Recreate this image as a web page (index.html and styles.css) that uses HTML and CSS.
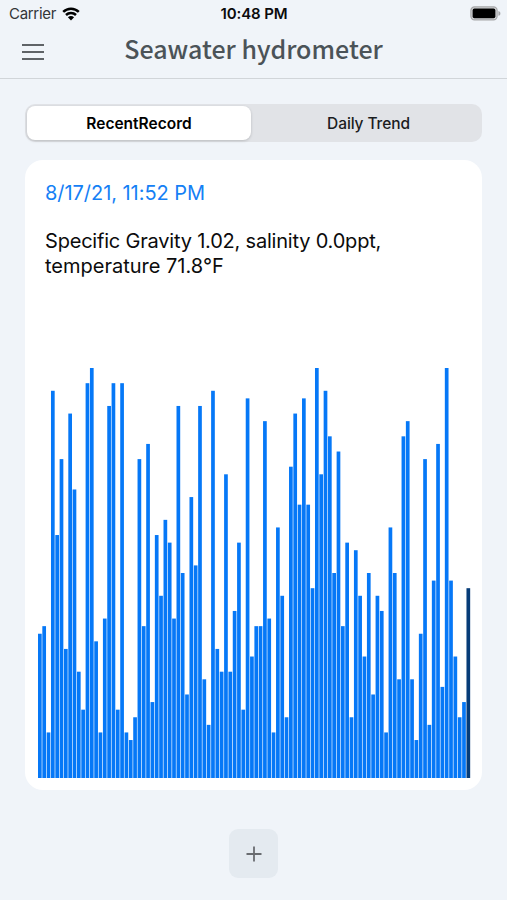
FILE: index.html
```html
<!DOCTYPE html>
<html lang="en">
<head>
    <meta charset="UTF-8">
    <meta name="viewport" content="width=device-width, initial-scale=1.0">
    <title>Seawater hydrometer</title>
    <link rel="stylesheet" href="styles.css">
</head>
<body>
    <div class="status-bar">
        <div class="carrier">
            <span>Carrier</span>
            <svg class="wifi" viewBox="0 0 18 14" width="18" height="14">
                <path d="M1.2 4.9a11.2 11.2 0 0 1 15.6 0" />
                <path d="M4 8a7.2 7.2 0 0 1 10 0" />
                <path class="dot" d="M5.9 10.3a4.6 4.6 0 0 1 6.2 0L9 13.5z" />
            </svg>
        </div>
        <div class="time">10:48 PM</div>
        <div class="battery">
            <svg viewBox="0 0 31 15" width="31" height="15">
                <rect class="shell" x="0.9" y="0.9" width="26.2" height="13" rx="3.6" />
                <rect x="2.6" y="2.6" width="22.8" height="9.6" rx="1.8" />
                <path class="tip" d="M28.4 5c1.5.5 2 1.4 2 2.4s-.5 1.9-2 2.4z" />
            </svg>
        </div>
    </div>
    <header>
        <button class="menu-btn" aria-label="Menu">
            <span></span>
            <span></span>
            <span></span>
        </button>
        <h1>Seawater hydrometer</h1>
    </header>
    <main>
        <div class="tabs">
            <button class="tab active">RecentRecord</button>
            <button class="tab">Daily Trend</button>
        </div>
        <div class="card">
            <div class="record-date">8/17/21, 11:52 PM</div>
            <p class="record-text"><span class="readings">Specific Gravity 1.02, salinity 0.0ppt,</span><br>temperature 71.8°F</p>
            <svg class="chart" id="chart" viewBox="0 0 433 410"></svg>
        </div>
        <button class="add-btn" aria-label="Add record">
            <svg viewBox="0 0 16 16" width="16" height="16">
                <path d="M8 0.5V15.5M0.5 8H15.5" />
            </svg>
        </button>
    </main>

    <script>
        const records = [
            19, 20, 6, 51, 32, 42, 17, 48, 38, 14, 9, 52, 54, 18, 6, 21, 49, 52, 9, 52,
            6, 5, 8, 42, 20, 44, 10, 32, 24, 34, 31, 21, 49, 27, 11, 37, 28, 49, 13, 7,
            51, 17, 14, 40, 14, 22, 31, 9, 50, 16, 20, 20, 47, 21, 6, 33, 24, 8, 41, 48,
            36, 50, 36, 25, 54, 40, 51, 45, 27, 43, 20, 31, 8, 30, 24, 16, 27, 11, 24, 22,
            6, 33, 27, 13, 45, 47, 13, 5, 19, 42, 7, 26, 44, 12, 54, 26, 16, 8, 10, 25
        ];
        const chartHeight = 410;
        const step = 4.328;
        const unit = chartHeight / 54;

        document.getElementById('chart').innerHTML = records.map((value, i) => {
            const height = value * unit;
            const current = i === records.length - 1 ? ' current' : '';
            return `<rect class="bar${current}" x="${(i * step).toFixed(2)}" y="${(chartHeight - height).toFixed(2)}" width="3.7" height="${height.toFixed(2)}" />`;
        }).join('');
    </script>
</body>
</html>
```
FILE: styles.css
```css
* {
    box-sizing: border-box;
}
body {
    font-family: Inter, 'Liberation Sans', sans-serif;
    margin: 0;
    height: 900px;
    background-color: #f0f4f9;
    color: #0b0b0c;
    overflow: hidden;
}
button {
    font-family: inherit;
    border: none;
    padding: 0;
    cursor: pointer;
}
svg {
    display: block;
}
.status-bar {
    display: grid;
    grid-template-columns: 1fr auto 1fr;
    align-items: center;
    height: 27px;
    padding: 0 6px 0 9px;
    font-size: 15px;
}
.carrier {
    display: flex;
    align-items: center;
    gap: 6px;
    letter-spacing: -0.3px;
    color: #333538;
}
.wifi {
    fill: none;
    stroke: #000;
    stroke-width: 2.5;
}
.wifi .dot {
    fill: #000;
    stroke: none;
}
.time {
    padding-right: 2px;
    font-weight: 600;
    letter-spacing: -0.1px;
}
.battery {
    justify-self: end;
}
.battery .shell {
    fill: #d5d6d8;
    stroke: #a5a6a8;
    stroke-width: 1.2;
}
.battery .tip {
    fill: #a5a6a8;
}
header {
    display: grid;
    grid-template-columns: 44px 1fr 44px;
    align-items: center;
    height: 52px;
    padding: 0 22px;
    border-bottom: 1px solid #d1d5d9;
}
.menu-btn {
    display: flex;
    flex-direction: column;
    gap: 5px;
    width: 22px;
    margin-bottom: 2px;
    background: none;
}
.menu-btn span {
    height: 2px;
    background-color: #5f6367;
}
header h1 {
    margin: 0 0 10px;
    font-family: 'Noto Sans CJK SC', 'Noto Sans', sans-serif;
    font-size: 25px;
    font-weight: 500;
    line-height: 36px;
    text-align: center;
    white-space: nowrap;
    color: #4b5358;
}
main {
    display: flex;
    flex-direction: column;
    align-items: center;
    padding: 25px 25px 0;
}
.tabs {
    display: flex;
    width: 100%;
    height: 38px;
    padding: 2px;
    border-radius: 10px;
    background-color: #e1e3e7;
}
.tab {
    flex: 1;
    padding-left: 6px;
    border-radius: 8px;
    background: none;
    font-size: 15.5px;
    font-weight: 500;
    letter-spacing: -0.1px;
    color: #1b1c1e;
}
.tab.active {
    flex: 0 0 224px;
    padding-left: 0;
    background-color: #fff;
    box-shadow: 0 1px 3px rgba(0, 0, 0, 0.18);
    font-weight: 600;
    letter-spacing: 0;
    color: #000;
}
.card {
    width: 100%;
    height: 630px;
    margin-top: 18px;
    padding: 21px 13px 12px;
    border-radius: 18px;
    background-color: #fff;
    display: flex;
    flex-direction: column;
}
.record-date {
    padding-left: 7px;
    font-size: 20px;
    line-height: 25px;
    letter-spacing: -0.05px;
    color: #1580f5;
}
.record-text {
    margin: 23px 0 0;
    padding-left: 7px;
    font-size: 20px;
    line-height: 25px;
    white-space: nowrap;
}
.readings {
    letter-spacing: -0.2px;
}
.chart {
    width: 433px;
    height: 410px;
    margin-top: auto;
}
.bar {
    fill: #0678f7;
}
.bar.current {
    fill: #063c78;
}
.add-btn {
    display: flex;
    align-items: center;
    justify-content: center;
    width: 49px;
    height: 49px;
    margin-top: 39px;
    border-radius: 9px;
    background-color: #e4eaf0;
}
.add-btn path {
    fill: none;
    stroke: #696c70;
    stroke-width: 1.8;
}
```
